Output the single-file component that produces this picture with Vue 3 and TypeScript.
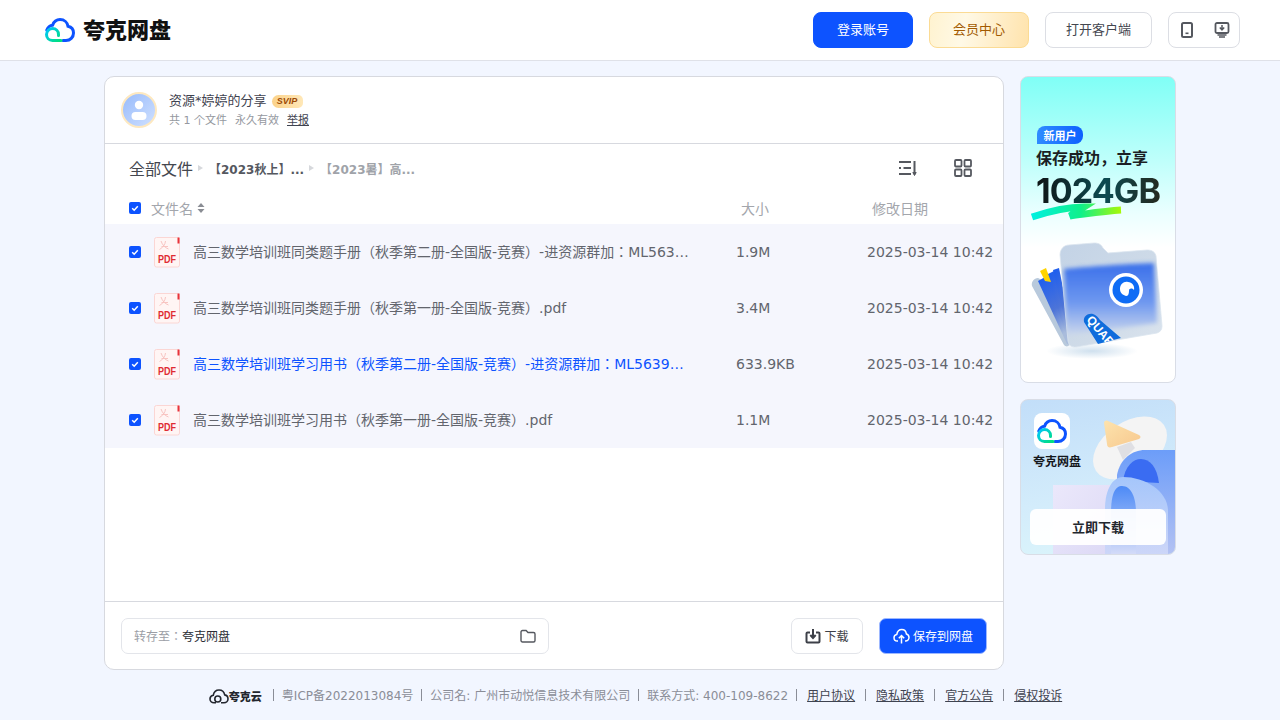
<script setup lang="ts">
interface FileRow { name: string; size: string; date: string; active?: boolean }
const files: FileRow[] = [
  { name: '高三数学培训班同类题手册（秋季第二册-全国版-竞赛）-进资源群加：ML563…', size: '1.9M', date: '2025-03-14 10:42' },
  { name: '高三数学培训班同类题手册（秋季第一册-全国版-竞赛）.pdf', size: '3.4M', date: '2025-03-14 10:42' },
  { name: '高三数学培训班学习用书（秋季第二册-全国版-竞赛）-进资源群加：ML5639…', size: '633.9KB', date: '2025-03-14 10:42', active: true },
  { name: '高三数学培训班学习用书（秋季第一册-全国版-竞赛）.pdf', size: '1.1M', date: '2025-03-14 10:42' },
]
const footerLinks: string[] = ['用户协议', '隐私政策', '官方公告', '侵权投诉']
</script>

<template>
  <div class="page">
    <header class="topbar">
      <div class="brand">
        <svg class="logo" viewBox="0 0 30 24" fill="none">
          <defs>
            <linearGradient id="lg-green" x1="0" y1="0.2" x2="1" y2="1">
              <stop offset="0" stop-color="#00c8f0" />
              <stop offset="1" stop-color="#00e07a" />
            </linearGradient>
          </defs>
          <path d="M1.800 12C3 8.800 5 7.400 7.600 7.200 9 3.400 12 1.600 15 1.600c4.400 0 7.400 3 8 6.600 3 .6 5.500 3 5.500 6.800 0 4.400-3.400 7.500-7.500 7.500H18" stroke="#0d53ff" stroke-width="3" stroke-linecap="round" />
          <path d="M16 22.500H7.500C4 22.500 1.500 20 1.500 16.500 1.500 13 4.500 10.500 7.500 10.500 11 10.500 13.500 13 13.500 16.500V17.500" stroke="url(#lg-green)" stroke-width="3" stroke-linecap="round" />
        </svg>
        <span class="brand-name">夸克网盘</span>
      </div>
      <nav class="actions">
        <button class="btn btn-login">登录账号</button>
        <button class="btn btn-vip">会员中心</button>
        <button class="btn btn-client">打开客户端</button>
        <div class="btn btn-icons">
          <svg width="14" height="16" viewBox="0 0 14 16" fill="none">
            <rect x="2" y="1" width="10" height="14" rx="1.500" stroke="#55585f" stroke-width="2" />
            <rect x="5.500" y="10.500" width="3" height="1.600" fill="#55585f" />
          </svg>
          <svg width="16" height="16" viewBox="0 0 16 16" fill="none">
            <rect x="1.500" y="1" width="13" height="10" rx="1.500" stroke="#55585f" stroke-width="1.800" />
            <path d="M8 3v4.500M5.800 5.500 8 7.800l2.200-2.300" stroke="#55585f" stroke-width="1.500" />
            <path d="M3.500 13h9M5 15h6" stroke="#55585f" stroke-width="1.400" />
          </svg>
        </div>
      </nav>
    </header>

    <main class="content">
      <section class="card">
        <div class="share-head">
          <div class="avatar">
            <svg width="20" height="22" viewBox="0 0 20 22" fill="#fff">
              <circle cx="10" cy="6" r="4.200" />
              <rect x="2.500" y="13" width="15" height="8" rx="4" />
            </svg>
          </div>
          <div class="share-info">
            <div class="share-title">
              <span>资源*婷婷的分享</span>
              <span class="svip">SVIP</span>
            </div>
            <div class="share-meta">
              <span>共 1 个文件</span>
              <span>永久有效</span>
              <a class="report">举报</a>
            </div>
          </div>
        </div>

        <div class="crumb-bar">
          <div class="crumbs">
            <span class="crumb-root">全部文件</span>
            <i class="arrow"></i>
            <span class="crumb-mid">【2023秋上】...</span>
            <i class="arrow"></i>
            <span class="crumb-last">【2023暑】高...</span>
          </div>
          <div class="view-tools">
            <svg width="20" height="18" viewBox="0 0 20 18" fill="none" stroke="#55585f" stroke-width="2">
              <path d="M1 3h12M1 9h2M5.500 9h7.500M1 15h12" />
              <path d="M16.500 2v13" />
              <path d="M16.500 16.500 14.800 13.500h3.400z" fill="#55585f" stroke-width="1" />
            </svg>
            <svg width="18" height="18" viewBox="0 0 18 18" fill="none" stroke="#55585f" stroke-width="1.800">
              <rect x="1" y="1" width="6.500" height="6.500" rx="1" />
              <rect x="10.500" y="1" width="6.500" height="6.500" rx="1" />
              <rect x="1" y="10.500" width="6.500" height="6.500" rx="1" />
              <rect x="10.500" y="10.500" width="6.500" height="6.500" rx="1" />
            </svg>
          </div>
        </div>

        <div class="table-head">
          <span class="check">
            <svg viewBox="0 0 12 12" width="12" height="12" fill="none"><path d="M3.200 6.200 5.200 8.200 8.800 4.200" stroke="#fff" stroke-width="1.500" /></svg>
          </span>
          <span class="th-name">文件名
            <svg width="8" height="12" viewBox="0 0 8 12" fill="#8a8d94"><path d="M4 1 7.500 5h-7zM4 11 .5 7h7z" /></svg>
          </span>
          <span class="th-size">大小</span>
          <span class="th-date">修改日期</span>
        </div>

        <ul class="rows">
          <li v-for="file in files" :key="file.name" class="row" :class="{ active: file.active }">
            <span class="check">
              <svg viewBox="0 0 12 12" width="12" height="12" fill="none"><path d="M3.200 6.200 5.200 8.200 8.800 4.200" stroke="#fff" stroke-width="1.500" /></svg>
            </span>
            <svg class="pdf" width="28" height="32" viewBox="0 0 28 32" fill="none">
              <rect x="1.500" y="1.500" width="25" height="29.500" rx="2" fill="#fff5f4" stroke="#fbd6d4" />
              <rect x="24.500" y="1.500" width="2" height="6" fill="#e8333a" />
              <path d="M8 5c1.500 4 3.500 6.500 7.500 8M12.500 5c-.3 3.500-2.500 6.500-6 8.500M8.500 10.500h6.500" stroke="#f8c4c1" stroke-width="1" />
              <text x="5" y="27" textLength="18" lengthAdjust="spacingAndGlyphs" class="pdf-text">PDF</text>
            </svg>
            <span class="name">{{ file.name }}</span>
            <span class="size">{{ file.size }}</span>
            <span class="date">{{ file.date }}</span>
          </li>
        </ul>

        <div class="bottom-bar">
          <div class="save-path">
            <span><span class="save-label">转存至：</span><span class="save-target">夸克网盘</span></span>
            <svg width="16" height="14" viewBox="0 0 16 14" fill="none" stroke="#55585f" stroke-width="1.400">
              <path d="M1 3a1.500 1.500 0 0 1 1.500-1.500h3.600L8 3.500h5.500A1.500 1.500 0 0 1 15 5v6.500a1.500 1.500 0 0 1-1.500 1.500h-11A1.500 1.500 0 0 1 1 11.500z" />
            </svg>
          </div>
          <div class="bottom-actions">
            <button class="act act-down">
              <svg width="16" height="16" viewBox="0 0 16 16" fill="none" stroke="#3d4048" stroke-width="2">
                <path d="M5 4.500H2.500a1 1 0 0 0-1 1v8a1 1 0 0 0 1 1h11a1 1 0 0 0 1-1v-8a1 1 0 0 0-1-1H11" />
                <path d="M8 1v8.500M5.300 7 8 10l2.700-3" />
              </svg>
              下载
            </button>
            <button class="act act-save">
              <svg width="17" height="16" viewBox="0 0 17 16" fill="none" stroke="#fff" stroke-width="1.500">
                <path d="M5 13H4.300C2.400 13 1 11.500 1 9.700 1 8 2.300 6.600 3.800 6.400 4.300 3.300 6.200 1.500 8.800 1.500c2.500 0 4.300 1.900 4.600 4.500 1.500.4 2.600 1.800 2.600 3.500 0 1.900-1.500 3.500-3.500 3.500H12" />
                <path d="M8.500 15.500V8M5.800 10.300 8.500 7.500l2.700 2.800" />
              </svg>
              保存到网盘
            </button>
          </div>
        </div>
      </section>

      <aside class="side">
        <div class="ad ad-new">
          <svg class="ad-art" width="154" height="305" viewBox="1 1 154 305" fill="none">
            <defs>
              <linearGradient id="swoosh" x1="0" y1="0" x2="1" y2="0">
                <stop offset="0" stop-color="#00f0e0" />
                <stop offset="0.55" stop-color="#0ff08a" />
                <stop offset="1" stop-color="#a8f808" />
              </linearGradient>
              <linearGradient id="folder-glass" x1="0" y1="0" x2="1" y2="1">
                <stop offset="0" stop-color="#c3d3e6" />
                <stop offset="0.6" stop-color="#cfdbe8" />
                <stop offset="1" stop-color="#dbe4ee" />
              </linearGradient>
              <linearGradient id="folder-face" x1="0" y1="0" x2="0" y2="1">
                <stop offset="0" stop-color="#3a70ea" />
                <stop offset="0.55" stop-color="#6f98f0" />
                <stop offset="1" stop-color="#ccd8ec" />
              </linearGradient>
              <radialGradient id="shade" cx="0.5" cy="0.5" r="0.5">
                <stop offset="0" stop-color="#cfe0ee" />
                <stop offset="1" stop-color="#ffffff" />
              </radialGradient>
              <linearGradient id="sheet" x1="0" y1="0" x2="0.4" y2="1">
                <stop offset="0" stop-color="#1a5cf0" />
                <stop offset="0.6" stop-color="#4d74d8" />
                <stop offset="1" stop-color="#a9bcdc" />
              </linearGradient>
              <filter id="soft" x="-10%" y="-10%" width="120%" height="120%">
                <feGaussianBlur stdDeviation="2" />
              </filter>
              <clipPath id="folder-clip">
                <path d="M40 179c0-6 4-10 9-10l25-2c4 0 7 1 9 5l5 5 39-3c5 0 8 2 9 6l6 70c0 4-2 6-5 7l-81 14c-4 0-7-1-8-6z" />
              </clipPath>
              <clipPath id="tag-clip">
                <path d="M64 246c-1-6 4-9 9-8 3 1 5 3 7 6l21 18-23 6z" />
              </clipPath>
            </defs>
            <path d="M12 141C30 135 48 131 64 131L50 140C66 138 84 135 101 134" stroke="url(#swoosh)" stroke-width="7" />
            <ellipse cx="72" cy="275" rx="46" ry="8" fill="url(#shade)" />
            <path d="M12 210c-1-4 2-8 6-8l8 4 26 62-4 2c-1 1-3 0-4-1z" fill="#b8c9dc" />
            <path d="M18 205l9-5 24 68-4 0z" fill="url(#sheet)" />
            <path d="M26 199l8-4 19 72-4 0z" fill="url(#sheet)" />
            <path d="M33 194l6-2 15 74-4 0z" fill="url(#sheet)" />
            <path d="M20 195l6-3 5 14-6-1z" fill="#ffd400" />
            <path d="M40 179c0-6 4-10 9-10l25-2c4 0 7 1 9 5l5 5 39-3c5 0 8 2 9 6l6 70c0 4-2 6-5 7l-81 14c-4 0-7-1-8-6z" fill="url(#folder-glass)" stroke="#dbe5ef" stroke-width="0.800" />
            <g clip-path="url(#folder-clip)">
              <path d="M44 193c20-2 58-5 90-6l3 60-90 12z" fill="url(#folder-face)" filter="url(#soft)" />
            </g>
            <circle cx="106" cy="214" r="17" fill="#fff" />
            <circle cx="106" cy="214" r="13.500" fill="#0f6cf5" />
            <path d="M100 213c0-5 4-8 8-7 4 0 7 4 6 8-2-2-5-2-5 1 0 3-1 5-3 5-3-1-6-3-6-7z" fill="#fff" />
            <path d="M64 246c-1-6 4-9 9-8 3 1 5 3 7 6l21 18-23 6z" fill="#0f6cdc" />
            <g clip-path="url(#tag-clip)">
              <text x="66" y="244" class="quark-tag" transform="rotate(50 66 244)">QUARK</text>
            </g>
          </svg>
          <div class="ad-copy">
            <span class="new-tag">新用户</span>
            <p class="ad-line">保存成功，立享</p>
            <p class="ad-big">1024GB</p>
          </div>
        </div>

        <div class="ad ad-app">
          <svg class="ad-art" width="154" height="154" viewBox="1 1 154 154" fill="none">
            <defs>
              <linearGradient id="lock-back" x1="0" y1="0" x2="0" y2="1">
                <stop offset="0" stop-color="#6c9df9" />
                <stop offset="1" stop-color="#b4c2f3" />
              </linearGradient>
              <linearGradient id="lock-front" x1="0" y1="0" x2="0" y2="1">
                <stop offset="0" stop-color="#a5c6fb" />
                <stop offset="1" stop-color="#cdd6f8" />
              </linearGradient>
              <linearGradient id="lock-hole" x1="0" y1="0" x2="0" y2="1">
                <stop offset="0" stop-color="#4d8af6" />
                <stop offset="0.7" stop-color="#a9c3f8" />
                <stop offset="1" stop-color="#d6dcf8" />
              </linearGradient>
              <linearGradient id="box-lilac" x1="0" y1="0" x2="1" y2="1">
                <stop offset="0" stop-color="#ebe8fb" />
                <stop offset="1" stop-color="#dcd8f5" />
              </linearGradient>
              <linearGradient id="tri" x1="0" y1="0" x2="1" y2="1">
                <stop offset="0" stop-color="#fde3ad" />
                <stop offset="1" stop-color="#f7c88e" />
              </linearGradient>
            </defs>
            <ellipse cx="110" cy="49" rx="41" ry="26" transform="rotate(-34 110 49)" fill="#f4f4f4" />
            <path d="M97 48l14-5 4 6-12 12z" fill="#dfdfe3" />
            <path d="M84 24c0-2 2-3 4-2l31 14c2 1 2 3 0 4L92 48c-3 1-5 0-5-3z" fill="url(#tri)" />
            <rect x="33" y="86" width="64" height="70" fill="url(#box-lilac)" />
            <path d="M97 156V76C100 60 112 51 125 51H156V156z" fill="url(#lock-back)" />
            <path d="M103 82C105 67 113 60 121 60 130 60 137 68 139 84z" fill="#3a6cf2" />
            <path d="M85 156V110C85 90 93 78 103 78 125 78 148 92 148 112V156z" fill="url(#lock-front)" />
            <path d="M91 156V114C91 93 96 87 102 87 112 87 116 100 116 114V156z" fill="url(#lock-hole)" />
          </svg>
          <div class="app-tile">
            <svg viewBox="0 0 30 24" width="30" height="24" fill="none">
              <path d="M1.800 12C3 8.800 5 7.400 7.600 7.200 9 3.400 12 1.600 15 1.600c4.400 0 7.400 3 8 6.600 3 .6 5.500 3 5.500 6.800 0 4.400-3.400 7.500-7.500 7.500H18" stroke="#0d53ff" stroke-width="3" stroke-linecap="round" />
              <path d="M16 22.500H7.500C4 22.500 1.500 20 1.500 16.500 1.500 13 4.500 10.500 7.500 10.500 11 10.500 13.500 13 13.500 16.500V17.500" stroke="url(#lg-green)" stroke-width="3" stroke-linecap="round" />
            </svg>
          </div>
          <p class="app-name">夸克网盘</p>
          <div class="app-btn">立即下载</div>
        </div>
      </aside>
    </main>

    <footer class="footer">
      <span class="foot-brand">
        <svg width="20" height="15" viewBox="0 0 20 15" fill="none" stroke="#23262e" stroke-width="1.600">
          <path d="M7 13.800H5C2.700 13.800 1 12.100 1 10 1 8 2.400 6.500 4.300 6.200 4.900 3 7.300 1 10 1c2.900 0 5.200 2 5.700 4.900C17.700 6.300 19 8 19 10c0 2.200-1.800 3.800-4 3.800h-3" />
          <circle cx="8.800" cy="10" r="3" />
        </svg>
        夸克云
      </span>
      <i class="sep"></i><span>粤ICP备2022013084号</span>
      <i class="sep"></i><span>公司名: 广州市动悦信息技术有限公司</span>
      <i class="sep"></i><span>联系方式: 400-109-8622</span>
      <template v-for="link in footerLinks" :key="link">
        <i class="sep"></i><a class="foot-link">{{ link }}</a>
      </template>
    </footer>
  </div>
</template>

<style>
html, body { margin: 0; background: #f2f6ff; }
</style>

<style scoped>
* { box-sizing: border-box; }
.page {
  width: 1280px;
  height: 720px;
  overflow: hidden;
  display: flex;
  flex-direction: column;
  font-family: "DejaVu Sans", "Noto Sans CJK JP", sans-serif;
  background: #f2f6ff;
  color: #55585f;
}
.topbar {
  height: 61px;
  flex: none;
  background: #fff;
  border-bottom: 1px solid #dfe1e8;
  display: flex;
  align-items: center;
  justify-content: space-between;
  padding: 0 40px 1px 45px;
}
.brand { display: flex; align-items: center; gap: 8px; }
.logo { width: 30px; height: 24px; }
.brand-name {
  font-family: "Noto Sans CJK SC", sans-serif;
  font-weight: 900;
  font-size: 22px;
  line-height: 26px;
  padding-bottom: 3px;
  color: #111;
}
.actions { display: flex; gap: 16px; }
.btn {
  height: 36px;
  border-radius: 8px;
  font-family: inherit;
  font-size: 13px;
  border: 1px solid #dcdee4;
  background: #fff;
  color: #44474f;
  padding: 0 0 2px;
}
.btn-login { width: 100px; background: #0d53ff; border-color: #0d53ff; color: #fff; }
.btn-vip {
  width: 100px;
  background: linear-gradient(100deg, #fff3d0 0%, #fff9e6 35%, #ffe3ac 100%);
  border-color: #fbdb94;
  color: #a25a00;
}
.btn-client { width: 107px; }
.btn-icons {
  width: 72px;
  display: flex;
  align-items: center;
  justify-content: space-between;
  padding: 0 9px 0 11px;
}
.content {
  flex: none;
  display: flex;
  gap: 16px;
  padding: 15px 0 0 104px;
}
.card {
  width: 900px;
  height: 594px;
  background: #fff;
  border: 1px solid #d7d9df;
  border-radius: 10px;
  display: flex;
  flex-direction: column;
  overflow: hidden;
}
.share-head {
  height: 67px;
  flex: none;
  border-bottom: 1px solid #d7d9df;
  display: flex;
  align-items: center;
  gap: 12px;
  padding: 0 16px;
}
.avatar {
  width: 36px;
  height: 36px;
  border-radius: 50%;
  border: 2px solid #fde8c0;
  background: linear-gradient(135deg, #98bbfb, #cfe0ff);
  display: flex;
  align-items: center;
  justify-content: center;
}
.share-info { display: flex; flex-direction: column; gap: 3px; }
.share-title {
  display: flex;
  align-items: center;
  gap: 5px;
  font-size: 13px;
  line-height: 18px;
  color: #3f4350;
}
.svip {
  width: 31px;
  height: 13px;
  border-radius: 8px 6px 6px 8px;
  background: linear-gradient(90deg, #fbd28a, #ffe8b8);
  color: #9c4a06;
  font-family: "Liberation Sans", sans-serif;
  font-size: 9px;
  font-weight: 700;
  font-style: italic;
  line-height: 13px;
  text-align: center;
}
.share-meta {
  display: flex;
  gap: 8px;
  font-size: 11px;
  line-height: 15px;
  color: #9598a0;
}
.report { color: #3f4350; text-decoration: underline; }
.crumb-bar {
  height: 48px;
  flex: none;
  display: flex;
  align-items: center;
  justify-content: space-between;
  padding: 0 31px 0 24px;
}
.crumbs { display: flex; align-items: center; }
.crumb-root { font-size: 16px; color: #44474f; }
.arrow {
  width: 0;
  height: 0;
  margin: 0 6px 0 5px;
  border-left: 5px solid #d6d8dc;
  border-top: 3.500px solid transparent;
  border-bottom: 3.500px solid transparent;
}
.crumb-mid { font-size: 12px; font-weight: 700; color: #55585f; }
.crumb-last { font-size: 12px; font-weight: 700; color: #a0a3a9; }
.view-tools { display: flex; gap: 36px; align-items: center; }
.table-head {
  height: 32px;
  flex: none;
  display: flex;
  align-items: center;
  padding-left: 24px;
  font-size: 14px;
  color: #a3a6ac;
}
.check {
  width: 12px;
  height: 12px;
  flex: none;
  border-radius: 2px;
  background: #0d53ff;
  display: block;
}
.check svg { display: block; }
.th-name { width: 590px; margin-left: 10px; display: flex; align-items: center; gap: 4px; }
.th-size { width: 131px; }
.th-date { width: 100px; }
.rows { list-style: none; margin: 0; padding: 0; flex: 1; }
.row {
  height: 56px;
  display: flex;
  align-items: center;
  background: #f5f6fd;
  padding-left: 24px;
  font-size: 14px;
  color: #62656d;
  white-space: nowrap;
}
.pdf { margin-left: 12px; flex: none; }
.pdf-text {
  font-family: "Liberation Sans", sans-serif;
  font-weight: 700;
  font-size: 11.500px;
  fill: #e02b32;
}
.name { width: 497px; margin-left: 12px; padding-bottom: 2px; }
.row.active .name { color: #0d53ff; }
.size { margin-left: 46px; width: 131px; }
.date { flex: none; }
.bottom-bar {
  height: 68px;
  flex: none;
  border-top: 1px solid #d7d9df;
  display: flex;
  align-items: center;
  justify-content: space-between;
  padding: 0 16px;
}
.save-path {
  width: 428px;
  height: 36px;
  border: 1px solid #e3e5ea;
  border-radius: 7px;
  display: flex;
  align-items: center;
  justify-content: space-between;
  padding: 0 12px;
  font-size: 12px;
}
.save-label { color: #9b9ea5; }
.save-target { color: #2a2d35; }
.bottom-actions { display: flex; gap: 16px; }
.act {
  height: 36px;
  border-radius: 7px;
  display: flex;
  align-items: center;
  justify-content: center;
  gap: 3px;
  font-family: inherit;
  font-size: 12px;
  padding: 0;
}
.act-down { width: 72px; background: #fff; border: 1px solid #e3e5ea; color: #3d4048; }
.act-save { width: 108px; background: #0d53ff; border: 1px solid #9db8ff; color: #fff; }
.side { width: 156px; display: flex; flex-direction: column; gap: 16px; }
.ad {
  position: relative;
  width: 156px;
  border: 1px solid #d9dde6;
  border-radius: 8px;
  overflow: hidden;
}
.ad-art { position: absolute; left: 0; top: 0; }
.quark-tag {
  font-family: "Liberation Sans", sans-serif;
  font-weight: 700;
  font-size: 12px;
  fill: #fff;
}
.ad-new {
  height: 307px;
  background: linear-gradient(180deg, #80fff6 0%, #c0fffb 28%, #ebffff 45%, #ffffff 56%);
}
.ad-copy { position: relative; padding: 49px 0 0 16px; }
.new-tag {
  display: block;
  width: 46px;
  height: 18px;
  border-radius: 8px 8px 8px 0;
  background: linear-gradient(90deg, #2f8cff, #0d60ff);
  color: #fff;
  font-size: 11px;
  font-weight: 700;
  line-height: 18px;
  text-align: center;
  font-family: "Noto Sans CJK SC", sans-serif;
}
.ad-line {
  margin: 2px 0 0 -1px;
  font-family: "Noto Sans CJK SC", sans-serif;
  font-size: 16px;
  font-weight: 700;
  line-height: 22px;
  color: #1b1f24;
  white-space: nowrap;
}
.ad-big {
  margin: 4px 0 0 -1px;
  font-family: Inter, sans-serif;
  font-size: 34px;
  font-weight: 700;
  line-height: 38px;
  letter-spacing: -0.900px;
  white-space: nowrap;
  background: linear-gradient(90deg, #0f1414 0%, #0c4b52 50%, #2a2010 100%);
  -webkit-background-clip: text;
  background-clip: text;
  color: transparent;
}
.ad-app {
  height: 156px;
  background: linear-gradient(170deg, #c2def9 0%, #d3ecfb 60%, #dcf6fb 100%);
}
.app-tile {
  position: absolute;
  left: 13px;
  top: 13px;
  width: 36px;
  height: 36px;
  border-radius: 8px;
  background: #fff;
  display: flex;
  align-items: center;
  justify-content: center;
}
.app-name {
  position: absolute;
  left: 12px;
  top: 52px;
  margin: 0;
  font-family: "Noto Sans CJK SC", sans-serif;
  font-weight: 700;
  font-size: 12px;
  line-height: 18px;
  color: #15181d;
}
.app-btn {
  position: absolute;
  left: 9px;
  top: 109px;
  width: 136px;
  height: 36px;
  border-radius: 6px;
  background: rgba(255, 255, 255, 0.94);
  font-family: "Noto Sans CJK SC", sans-serif;
  font-weight: 700;
  font-size: 13px;
  line-height: 36px;
  text-align: center;
  color: #23262e;
}
.footer {
  flex: none;
  margin-top: 15px;
  padding-right: 7px;
  display: flex;
  align-items: center;
  justify-content: center;
  font-size: 12px;
  line-height: 22px;
  color: #8a8d97;
  white-space: nowrap;
}
.foot-brand {
  display: flex;
  align-items: center;
  font-family: "Noto Sans CJK SC", sans-serif;
  font-weight: 900;
  font-size: 11px;
  color: #23262e;
}
.sep {
  width: 1px;
  height: 12px;
  margin: 0 8px 2px 8px;
  background: #8a8d97;
}
.foot-brand + .sep { margin-left: 11px; }
.foot-link { color: #3f4350; text-decoration: underline; margin: 0 2px; }
</style>
